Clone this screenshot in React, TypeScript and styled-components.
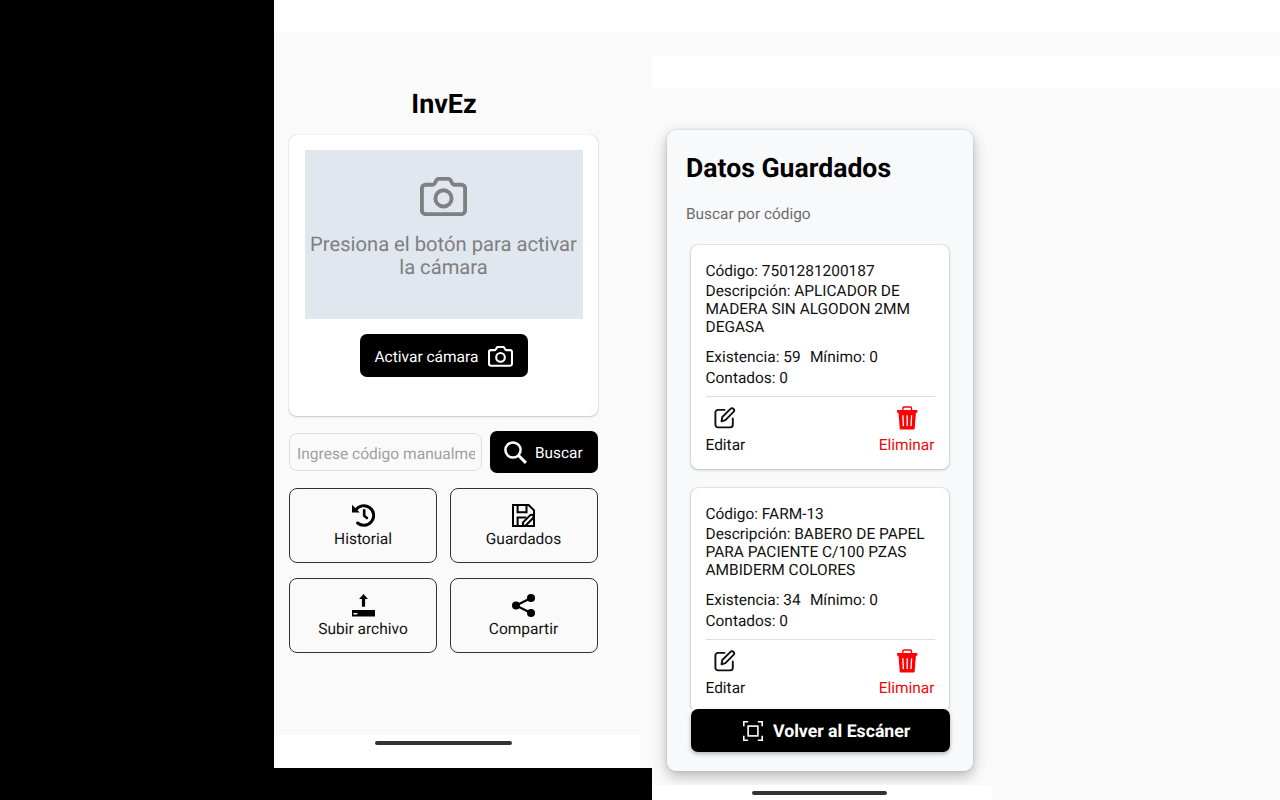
import React from "react";
import styled, { createGlobalStyle, css } from "styled-components";

const Global = createGlobalStyle`
  * { box-sizing: border-box; }
  body { margin: 0; background: #000; font-family: Roboto, "Liberation Sans", sans-serif; color: #111; overflow: hidden; text-rendering: geometricPrecision; }
  h1, h2, p { margin: 0; }
  svg { display: block; flex: none; }
  button { font: inherit; letter-spacing: inherit; color: inherit; text-rendering: inherit; }
`;

const Stage = styled.main`
  display: grid;
  grid-template-columns: 378px 628px;
  width: 1280px;
  height: 800px;
  padding-left: 274px;
  overflow: hidden;
  background: #000;
`;

const Screen = styled.section<{ $height: number }>`
  display: flex;
  flex-direction: column;
  height: ${(p) => p.$height}px;
  background: #fafafa;
  overflow: hidden;
`;

const Band = styled.div<{ $height: number; $tone?: string }>`
  flex: none;
  height: ${(p) => p.$height}px;
  background: ${(p) => p.$tone ?? "#fff"};
`;

const ScannerBody = styled.div`
  display: flex;
  flex-direction: column;
  flex: 1;
  width: 339px;
  padding: 58px 15px 0;
`;

const SavedBody = styled.div`
  flex: 1;
  min-height: 0;
  padding: 42px 15px 0;
  overflow: hidden;
`;

const NavBar = styled.div<{ $width: number; $height: number; $inset: number; $top: number }>`
  flex: none;
  width: ${(p) => p.$width}px;
  height: ${(p) => p.$height}px;
  padding: ${(p) => p.$top}px 0 0 ${(p) => p.$inset}px;
  background: #fff;
`;

const HomePill = styled.div<{ $width: number }>`
  width: ${(p) => p.$width}px;
  height: 4px;
  border-radius: 2px;
  background: #333;
`;

const AppTitle = styled.h1`
  height: 45px;
  padding-left: 1px;
  font-size: 26.9px;
  line-height: 28px;
  font-weight: 700;
  text-align: center;
  color: #000;
`;

const CameraCard = styled.div`
  display: flex;
  flex-direction: column;
  align-items: center;
  height: 281px;
  padding: 15px 15px 0;
  border-radius: 8px;
  background: #fff;
  box-shadow: 0 0 1px rgba(0, 0, 0, 0.22), 0 1px 2px rgba(0, 0, 0, 0.18);
`;

const Preview = styled.div`
  display: flex;
  flex-direction: column;
  align-items: center;
  width: 278px;
  height: 169px;
  margin-bottom: 15px;
  padding-top: 26.5px;
  background: #e1e7ef;
  color: #808080;
`;

const PreviewText = styled.p`
  width: 275px;
  margin-top: 17px;
  font-size: 20.2px;
  line-height: 23.4px;
  text-align: center;
`;

const solid = css`
  display: flex;
  align-items: center;
  border: 0;
  border-radius: 7px;
  background: #000;
  color: #fff;
`;

const ActivateButton = styled.button`
  ${solid}
  width: 168px;
  height: 43px;
  padding: 2px 15px 0;
  justify-content: space-between;
  font-size: 15.5px;
`;

const SearchRow = styled.div`
  display: flex;
  align-items: center;
  justify-content: space-between;
  margin-top: 15px;
  height: 42px;
`;

const CodeInput = styled.div`
  width: 193px;
  height: 38px;
  padding: 1px 6.5px 0 7px;
  border: 1px solid #dcdfe6;
  border-radius: 8px;
  color: #a0a0a0;
  font-size: 15.55px;
  line-height: 38px;
`;

const Clip = styled.div`
  overflow: hidden;
  white-space: nowrap;
`;

const SearchButton = styled.button`
  ${solid}
  width: 108px;
  height: 42px;
  padding: 1px 14px 0;
  gap: 8px;
  font-size: 15.4px;
`;

const TileGrid = styled.div`
  display: grid;
  grid-template-columns: 148px 148px;
  justify-content: space-between;
  row-gap: 15px;
  margin-top: 15px;
`;

const Tile = styled.button`
  display: flex;
  flex-direction: column;
  align-items: center;
  height: 75px;
  padding: 15px 0 0;
  border: 1px solid #333;
  border-radius: 8px;
  background: #fafafa;
  color: #000;
  font-size: 15.5px;
  line-height: 20px;

  &:nth-child(even) {
    padding-right: 1px;
  }
`;

const TileLabel = styled.span`
  margin-top: 2px;
  color: #111;
`;

const SavedCard = styled.div`
  display: flex;
  flex-direction: column;
  width: 306px;
  height: 641px;
  padding: 24px 19px 0;
  border-radius: 9px;
  background: #f8f9fb;
  box-shadow: 0 5px 14px rgba(0, 0, 0, 0.28), 0 0 3px rgba(0, 0, 0, 0.12);
`;

const SavedTitle = styled.h2`
  font-size: 26.6px;
  line-height: 30px;
  font-weight: 700;
  color: #000;
`;

const Filter = styled.p`
  height: 41px;
  margin-top: 20px;
  font-size: 15.4px;
  line-height: 20px;
  color: #6c6c6c;
`;

const List = styled.div`
  display: flex;
  flex-direction: column;
  gap: 19px;
  height: 465.4px;
  margin: -1px -8px 0;
  padding: 1px 13.5px 0 12.5px;
  overflow: hidden;
`;

const Item = styled.article`
  flex: none;
  height: 224px;
  padding: 16.5px 14px 0 15px;
  border-radius: 7px;
  background: #fff;
  box-shadow: 0 0 1.5px rgba(0, 0, 0, 0.3), 0 1px 3px rgba(0, 0, 0, 0.2);
  font-size: 15.45px;
  line-height: 18.1px;
`;

const Line = styled.p<{ $top?: number }>`
  margin-top: ${(p) => p.$top ?? 0}px;
  white-space: pre-line;
`;

const Counts = styled.div`
  display: flex;
  gap: 9.3px;
  margin-top: 12px;
`;

const Actions = styled.div`
  display: flex;
  justify-content: space-between;
  margin-top: 8.5px;
  padding-top: 9px;
  border-top: 1px solid #dedede;
`;

const Action = styled.div<{ $danger?: boolean }>`
  display: flex;
  flex-direction: column;
  align-items: center;
  gap: 6px;
  color: ${(p) => (p.$danger ? "#f00" : "#111")};
`;

const ActionLabel = styled.span<{ $danger?: boolean }>`
  color: ${(p) => (p.$danger ? "#ee0a0a" : "#111")};
`;

const BackButton = styled.button`
  ${solid}
  flex: none;
  width: 259px;
  height: 42.5px;
  margin-left: 4.5px;
  padding: 1px 0 0 52px;
  gap: 10.5px;
  box-shadow: 0 2px 4px rgba(0, 0, 0, 0.28);
  font-size: 17.7px;
  font-weight: 700;
`;

const BackLabel = styled.span`
  padding-top: 1px;
`;

const CameraIcon = ({ width }: { width: number }) => (
  <svg width={width} height={(width * 39) / 47} viewBox="0 0 47 39" fill="none" stroke="currentColor" strokeWidth="3.9" strokeLinejoin="round">
    <path d="M5.6 7.8h6.8c1 0 1.7-.5 2.2-1.3l2-3.4c.4-.8 1-1.2 1.9-1.2h10c.9 0 1.5.4 1.9 1.2l2 3.4c.5.8 1.2 1.3 2.2 1.3h6.8c2 0 3.7 1.5 3.7 3.5v22.3c0 2-1.7 3.5-3.7 3.5H5.6c-2 0-3.7-1.5-3.7-3.5V11.3c0-2 1.7-3.5 3.7-3.5z" />
    <circle cx="23.5" cy="21.4" r="8.1" />
  </svg>
);

const SearchIcon = () => (
  <svg width="23" height="23" viewBox="0 0 23 23" fill="none" stroke="currentColor" strokeWidth="2.5">
    <circle cx="9" cy="9" r="7.6" />
    <path d="M14.3 14.3l7.6 7.6" strokeWidth="3" />
  </svg>
);

const HistoryIcon = () => (
  <svg width="23" height="23" viewBox="0 0 23 23" fill="none" stroke="currentColor">
    <path d="M3.6 6.2A9.8 9.8 0 1 1 5.6 19" strokeWidth="3" strokeLinecap="round" />
    <path d="M0 .8v7.7h7.7z" fill="currentColor" stroke="none" />
    <path d="M12.2 6.3v5.4l2.7 2.2" strokeWidth="2.6" strokeLinecap="round" strokeLinejoin="round" />
  </svg>
);

const SaveIcon = () => (
  <svg width="23" height="23" viewBox="0 0 23 23" fill="none" stroke="currentColor" strokeWidth="2">
    <path d="M1 1h15.6L22 6.4V22H1z" />
    <path d="M5.6 1v7.2h8.9V1" />
    <path d="M5.6 22v-8.4h8.6" />
    <path d="M10.9 21.8v-3.2l7.1-7.2c.9-.9 2.1-.8 2.9 0 .8.8.8 2 0 2.8l-7.4 7.6z" />
  </svg>
);

const UploadIcon = () => (
  <svg width="23" height="23" viewBox="0 0 23 23" fill="currentColor">
    <path d="M11.5 0l4.4 5.1h-2.8v7.6H9.9V5.1H7.1z" />
    <path fillRule="evenodd" d="M0 16h23v6.5H0zM1.5 19.1v1.3h3.8v-1.3z" />
  </svg>
);

const ShareIcon = () => (
  <svg width="23" height="23" viewBox="0 0 23 23" fill="currentColor">
    <path d="M19 4L4 11.5 19 19" fill="none" stroke="currentColor" strokeWidth="2.1" />
    <circle cx="19" cy="4" r="4" />
    <circle cx="4" cy="11.5" r="4" />
    <circle cx="19" cy="19" r="4" />
  </svg>
);

const EditIcon = () => (
  <svg width="22" height="24" viewBox="0 0 22 24" fill="none" stroke="currentColor" strokeWidth="1.9" strokeLinecap="round" strokeLinejoin="round">
    <path d="M10.5 3.9H4a2.6 2.6 0 0 0-2.6 2.6v12.3A2.6 2.6 0 0 0 4 21.4h12.2a2.6 2.6 0 0 0 2.6-2.6v-6.3" />
    <path d="M7.5 15.3l.8-4.3 8.2-8.1c.9-.9 2.2-.8 3 0s.9 2.1 0 3l-8.1 8.3z" />
  </svg>
);

const TrashIcon = () => (
  <svg width="22" height="24" viewBox="-0.2 0 22 24" fill="currentColor">
    <path d="M6.7 4V2.2c0-.7.5-1.2 1.2-1.2h6.2c.7 0 1.2.5 1.2 1.2V4" fill="none" stroke="currentColor" strokeWidth="1.4" />
    <path d="M.9 4h20.2v2.8h-1.4l-1.2 15.4c-.1.8-.7 1.3-1.4 1.3H4.9c-.8 0-1.4-.5-1.4-1.3L2.3 6.8H.9z" />
    <path d="M6.6 9.2l.6 10.9M11 9.2v10.9M15.4 9.2l-.6 10.9" stroke="#fff" strokeWidth="1.3" />
  </svg>
);

const ScanIcon = () => (
  <svg width="20" height="20" viewBox="0 0 20 20" fill="none" stroke="currentColor" strokeWidth="1.6">
    <path d="M.8 5.2V.8h4.4M14.8.8h4.4v4.4M19.2 14.8v4.4h-4.4M5.2 19.2H.8v-4.4" />
    <rect x="5.1" y="5.1" width="9.8" height="9.8" />
  </svg>
);

const tiles = [
  { label: "Historial", icon: <HistoryIcon /> },
  { label: "Guardados", icon: <SaveIcon /> },
  { label: "Subir archivo", icon: <UploadIcon /> },
  { label: "Compartir", icon: <ShareIcon /> },
];

const items = [
  { code: "7501281200187", text: "APLICADOR DE\nMADERA SIN ALGODON 2MM\nDEGASA", stock: 59 },
  { code: "FARM-13", text: "BABERO DE PAPEL\nPARA PACIENTE C/100 PZAS\nAMBIDERM COLORES", stock: 34 },
];

export default function App() {
  return (
    <>
      <Global />
      <Stage>
        <Screen $height={768}>
          <Band $height={32} />
          <ScannerBody>
            <AppTitle>InvEz</AppTitle>
            <CameraCard>
              <Preview>
                <CameraIcon width={47} />
                <PreviewText>Presiona el botón para activar la cámara</PreviewText>
              </Preview>
              <ActivateButton>
                Activar cámara
                <CameraIcon width={25} />
              </ActivateButton>
            </CameraCard>
            <SearchRow>
              <CodeInput>
                <Clip>Ingrese código manualmente</Clip>
              </CodeInput>
              <SearchButton>
                <SearchIcon />
                Buscar
              </SearchButton>
            </SearchRow>
            <TileGrid>
              {tiles.map((t) => (
                <Tile key={t.label}>
                  {t.icon}
                  <TileLabel>{t.label}</TileLabel>
                </Tile>
              ))}
            </TileGrid>
          </ScannerBody>
          <NavBar $width={366} $height={33} $inset={101} $top={6}>
            <HomePill $width={137} />
          </NavBar>
        </Screen>
        <Screen $height={800}>
          <Band $height={32} />
          <Band $height={24} $tone="#fafafa" />
          <Band $height={32} />
          <SavedBody>
            <SavedCard>
              <SavedTitle>Datos Guardados</SavedTitle>
              <Filter>Buscar por código</Filter>
              <List>
                {items.map((it) => (
                  <Item key={it.code}>
                    <Line>{`Código: ${it.code}`}</Line>
                    <Line $top={2.5}>{`Descripción: ${it.text}`}</Line>
                    <Counts>
                      <span>{`Existencia: ${it.stock}`}</span>
                      <span>Mínimo: 0</span>
                    </Counts>
                    <Line $top={2.5}>Contados: 0</Line>
                    <Actions>
                      <Action>
                        <EditIcon />
                        <ActionLabel>Editar</ActionLabel>
                      </Action>
                      <Action $danger>
                        <TrashIcon />
                        <ActionLabel $danger>Eliminar</ActionLabel>
                      </Action>
                    </Actions>
                  </Item>
                ))}
              </List>
              <BackButton>
                <ScanIcon />
                <BackLabel>Volver al Escáner</BackLabel>
              </BackButton>
            </SavedCard>
          </SavedBody>
          <NavBar $width={340} $height={15} $inset={100} $top={6}>
            <HomePill $width={135} />
          </NavBar>
        </Screen>
      </Stage>
    </>
  );
}
